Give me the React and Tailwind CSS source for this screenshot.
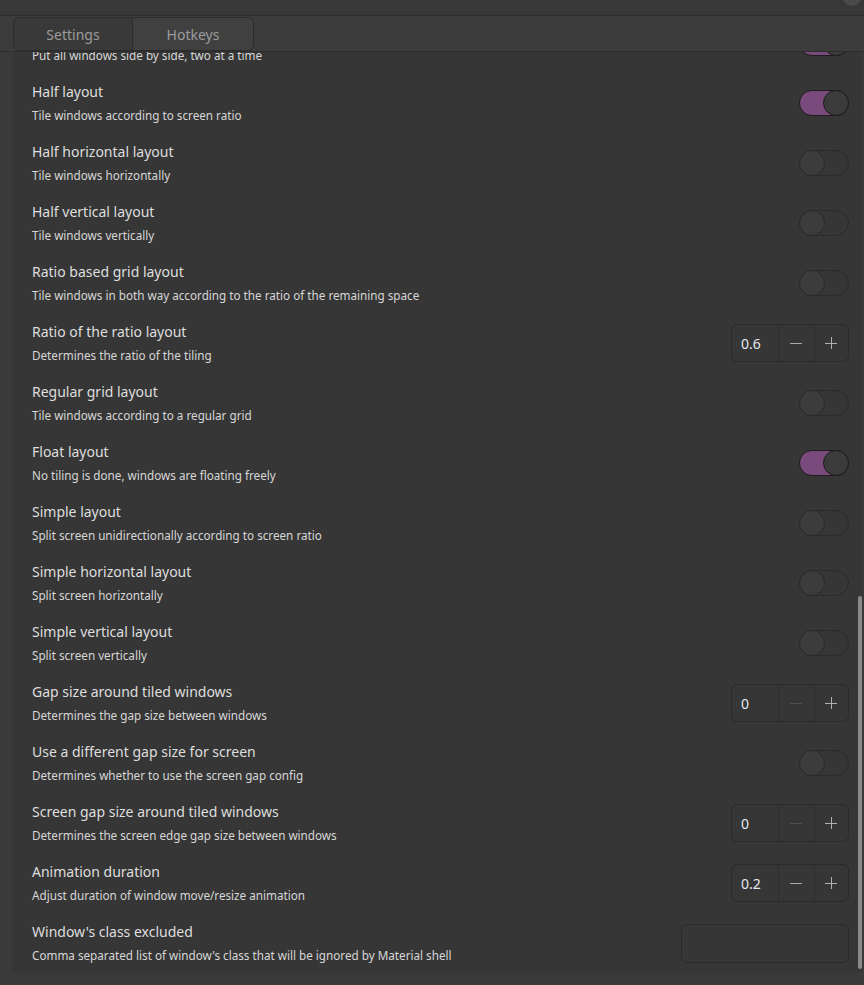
import React from "react";

const rows = [
  { title: "Put all windows side by side, two at a time", desc: "Put all windows side by side, two at a time", type: "toggle", on: true },
  { title: "Half layout", desc: "Tile windows according to screen ratio", type: "toggle", on: true },
  { title: "Half horizontal layout", desc: "Tile windows horizontally", type: "toggle" },
  { title: "Half vertical layout", desc: "Tile windows vertically", type: "toggle" },
  { title: "Ratio based grid layout", desc: "Tile windows in both way according to the ratio of the remaining space", type: "toggle" },
  { title: "Ratio of the ratio layout", desc: "Determines the ratio of the tiling", type: "spin", value: "0.6" },
  { title: "Regular grid layout", desc: "Tile windows according to a regular grid", type: "toggle" },
  { title: "Float layout", desc: "No tiling is done, windows are floating freely", type: "toggle", on: true },
  { title: "Simple layout", desc: "Split screen unidirectionally according to screen ratio", type: "toggle" },
  { title: "Simple horizontal layout", desc: "Split screen horizontally", type: "toggle" },
  { title: "Simple vertical layout", desc: "Split screen vertically", type: "toggle" },
  { title: "Gap size around tiled windows", desc: "Determines the gap size between windows", type: "spin", value: "0", min: true },
  { title: "Use a different gap size for screen", desc: "Determines whether to use the screen gap config", type: "toggle" },
  { title: "Screen gap size around tiled windows", desc: "Determines the screen edge gap size between windows", type: "spin", value: "0", min: true },
  { title: "Animation duration", desc: "Adjust duration of window move/resize animation", type: "spin", value: "0.2" },
  { title: "Window's class excluded", desc: "Comma separated list of window's class that will be ignored by Material shell", type: "entry" },
];

function Toggle({ on }) {
  if (on) {
    return (
      <div className="relative w-[50px] h-[26px] rounded-full bg-[#7b4a7d] border border-[#1c1c1c]">
        <div className="absolute right-[-1px] top-[-1px] w-[26px] h-[26px] rounded-full bg-[#3b3b3b] border border-[#1c1c1c]" />
      </div>
    );
  }
  return (
    <div className="relative w-[50px] h-[26px] rounded-full bg-[#363636] border border-[#2a2a2a]">
      <div className="absolute left-[-1px] top-[-1px] w-[26px] h-[26px] rounded-full bg-[#3c3c3c] border border-[#2a2a2a]" />
    </div>
  );
}

function Spin({ value, min }) {
  return (
    <div className="flex h-[38px] w-[118px] rounded-md border border-[#2a2a2a] text-[14px]">
      <div className="w-[47px] flex items-center pl-[9px] text-[#e4e8ee]">{value}</div>
      <div className={"w-[36px] flex items-center justify-center border-l border-[#2e2e2e] " + (min ? "text-[#4e4e4e]" : "text-[#a8a8a8]")}>
        <svg width="12" height="12" viewBox="0 0 12 12"><path d="M0 6.5h12" stroke="currentColor" strokeWidth="1" /></svg>
      </div>
      <div className="w-[35px] flex items-center justify-center border-l border-[#2e2e2e] text-[#b0b0b0]">
        <svg width="12" height="12" viewBox="0 0 12 12"><path d="M0 6.5h12M6.5 0v12" stroke="currentColor" strokeWidth="1" /></svg>
      </div>
    </div>
  );
}

export default function App() {
  return (
    <div className="w-[864px] h-[985px] bg-[#3a3a3a] flex flex-col overflow-hidden relative" style={{ fontFamily: '"Noto Sans", "Open Sans", sans-serif' }}>
      <div className="h-[16px] bg-[#383838] border-b border-[#2c2c2c] shrink-0 relative">
        <div className="absolute right-[2px] top-[-14px] w-[20px] h-[20px] rounded-full bg-[#4a4a4a]" />
      </div>
      <div className="flex-1 flex flex-col pl-[12px] pr-[2px] pb-[13px] relative">
        <div className="absolute z-10 left-0 right-0 top-0 h-[36px] bg-[#3c3c3c] border-b border-[#2e2e2e]">
          <div className="flex ml-[13px] mt-[1px] h-[34px] text-[14px] text-[#9c9c9c]">
            <div className="w-[120px] flex items-center justify-center bg-[#393939] border border-[#2c2c2c] rounded-tl-md rounded-bl-md">Settings</div>
            <div className="w-[121px] flex items-center justify-center bg-[#404040] border border-l-0 border-[#2c2c2c] rounded-tr-md rounded-br-md">Hotkeys</div>
          </div>
        </div>
        <div className="mt-[35px] flex-1 bg-[#363636] overflow-hidden relative">
          <div className="mt-[-38px] pl-[20px] pr-[13px]">
            {rows.map((r, i) => (
              <div key={i} className="h-[60px] flex items-center justify-between">
                <div className="flex flex-col">
                  <div className={"text-[14px] leading-[20px] text-[#dedede] " + (i === 0 ? "invisible" : "")}>{r.title}</div>
                  <div className="text-[11.7px] leading-[20px] mt-[3px] text-[#d6d6d6]">{r.desc}</div>
                </div>
                <div>
                  {r.type === "toggle" && <Toggle on={r.on} />}
                  {r.type === "spin" && <Spin value={r.value} min={r.min} />}
                  {r.type === "entry" && <div className="w-[168px] h-[39px] rounded-md border border-[#2a2a2a]" />}
                </div>
              </div>
            ))}
          </div>
          <div className="absolute right-[0px] top-[545px] w-[4px] h-[373px] rounded-full bg-[#8a8a8a]" />
        </div>
      </div>
    </div>
  );
}
